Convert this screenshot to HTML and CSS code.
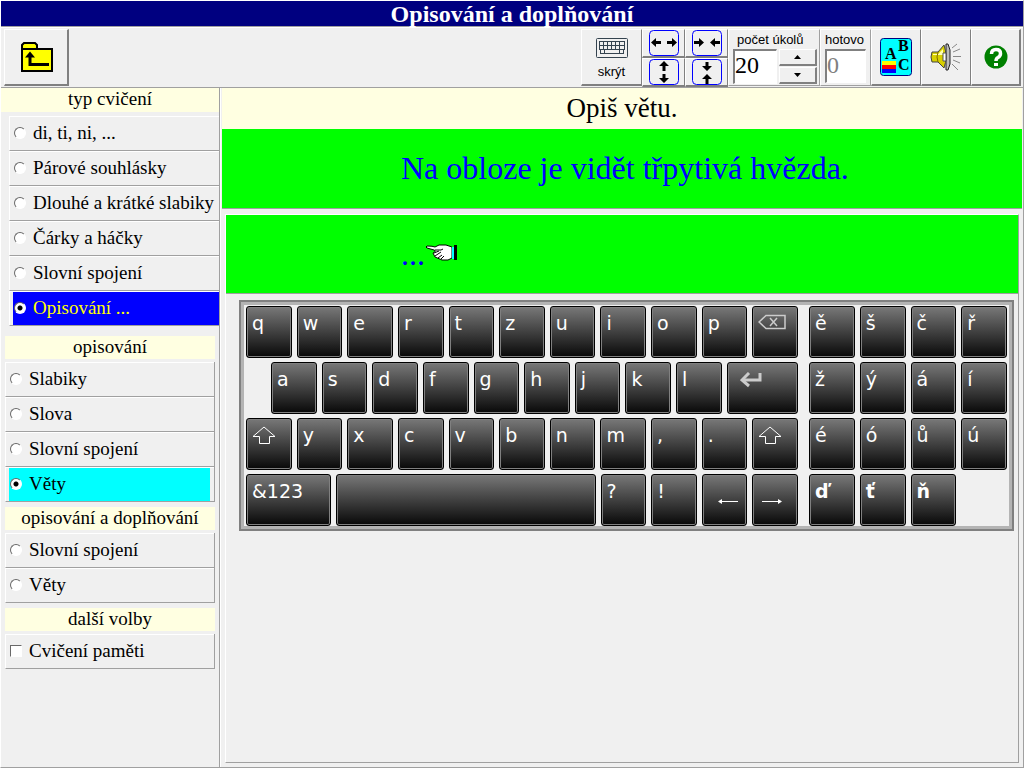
FILE: index.html
```html
<!DOCTYPE html>
<html lang="cs">
<head>
<meta charset="utf-8">
<title>Opisování a doplňování</title>
<link rel="stylesheet" href="styles.css">
</head>
<body>
<div class="app">
  <h1 class="title">Opisování a doplňování</h1>
  <header class="toolbar">
    <button class="back" aria-label="Zpět">
      <svg width="32" height="30" viewBox="0 0 32 30"><path d="M1 7V3L3 1H14L16 3V7H31V29H1Z" fill="#ff0" stroke="#000" stroke-width="2"/><path d="M2 7H16" stroke="#000" stroke-width="2"/><path d="M9 13V22.500H28" fill="none" stroke="#000" stroke-width="3"/><path d="M4 15.500L9 9.500L14 15.500Z"/></svg>
    </button>
    <div class="tools">
      <button class="tool hide"><svg width="32" height="20" viewBox="0 0 32 20"><g fill="none" stroke="#34434f"><rect x=".5" y=".5" width="31" height="19" rx="1"/><path d="M3 3.500H29M3 7.500H29M3 11.500H29M4 15.500H28M3.500 3V12M7.500 3V12M11.500 3V12M15.500 3V12M19.500 3V12M23.500 3V12M28.500 3V12M4.500 12V16M8.500 12V16M23.500 12V16M27.500 12V16"/></g></svg>skrýt</button>
      <div class="sizes">
        <button class="size" aria-label="Rozšířit"><svg width="30" height="26" viewBox="0 0 30 26"><rect class="frame" x=".5" y=".5" width="29" height="25" rx="4"/><path class="ink" d="M4 12.500H12M18 12.500H26"/><path d="M2 12.500L7 8V17ZM28 12.500L23 8V17Z"/></svg></button>
        <button class="size" aria-label="Zúžit"><svg width="30" height="26" viewBox="0 0 30 26"><rect class="frame" x=".5" y=".5" width="29" height="25" rx="4"/><path class="ink" d="M2 12.500H10M20 12.500H28"/><path d="M12 12.500L7 8V17ZM18 12.500L23 8V17Z"/></svg></button>
        <button class="size" aria-label="Zvýšit"><svg width="30" height="26" viewBox="0 0 30 26"><rect class="frame" x=".5" y=".5" width="29" height="25" rx="4"/><path class="ink" d="M15 4V12M15 15V22"/><path d="M15 2L20 7H10ZM15 24L20 19H10Z"/></svg></button>
        <button class="size" aria-label="Snížit"><svg width="30" height="26" viewBox="0 0 30 26"><rect class="frame" x=".5" y=".5" width="29" height="25" rx="4"/><path class="ink" d="M15 3V10M15 17V25"/><path d="M15 12L20 7H10ZM15 15L20 20H10Z"/></svg></button>
      </div>
      <div class="count tasks">
        <label for="tasks">počet úkolů</label>
        <div class="spin">
          <input id="tasks" type="text" value="20">
          <div class="steps"><button aria-label="Více"><svg width="7" height="4"><path d="M0 4L3.500 0L7 4Z"/></svg></button><button aria-label="Méně"><svg width="7" height="4"><path d="M0 0H7L3.500 4Z"/></svg></button></div>
        </div>
      </div>
      <div class="count done">
        <label for="done">hotovo</label>
        <input id="done" type="text" value="0" readonly>
      </div>
      <button class="tool" aria-label="Písmo"><svg width="32" height="38" viewBox="0 0 32 38"><rect x=".5" y=".5" width="31" height="37" rx="3" fill="#0ff" stroke="#000080"/><path d="M2 23H16V27H2Z" fill="#ff0"/><path d="M2 27H16V31H2Z" fill="#f00"/><path d="M2 31H16V35H2Z" fill="#00f"/><g class="letters"><text x="5" y="21">A</text><text x="18" y="13">B</text><text x="18" y="32">C</text></g></svg></button>
      <button class="tool" aria-label="Zvuk"><svg width="32" height="30" viewBox="0 0 32 30"><path d="M16 2H18L20 8V22L18 28H16Z" fill="#bbb" stroke="#222"/><path d="M2 10H8L14 3Q18 15 14 26L8 20H2Q0 15 2 10Z" fill="#d8d000" stroke="#444"/><path d="M3 12H8L13 7V13H3Z" fill="#ffffb0"/><path d="M8 10Q6 15 8 20" fill="none" stroke="#806c00"/><path d="M13 11H16V19H13Z" fill="#fff" stroke="#555"/><path d="M22 6L27 2M23 10L30 7M23 14.500H31M23 18L30 21M22 22L28 28" stroke="#888"/></svg></button>
      <button class="tool" aria-label="Nápověda"><svg width="24" height="24" viewBox="0 0 24 24"><circle cx="12" cy="12" r="11.500" fill="#008000"/><path d="M7.500 9Q7.500 4.500 12 4.500T16.500 8.500Q16.500 11 14 12.500Q12 13.500 12 16" fill="none" stroke="#fff" stroke-width="3.500"/><path d="M10 18H14V21H10Z" fill="#fff"/></svg></button>
    </div>
  </header>
  <div class="body">
    <aside class="side">
      <h2 class="group wide">typ cvičení</h2>
      <div class="list types">
        <label class="opt"><input type="radio" name="type">di, ti, ni, ...</label>
        <label class="opt"><input type="radio" name="type">Párové souhlásky</label>
        <label class="opt"><input type="radio" name="type">Dlouhé a krátké slabiky</label>
        <label class="opt"><input type="radio" name="type">Čárky a háčky</label>
        <label class="opt"><input type="radio" name="type">Slovní spojení</label>
        <label class="opt blue"><input type="radio" name="type" checked>Opisování ...</label>
      </div>
      <h2 class="group">opisování</h2>
      <div class="list">
        <label class="opt"><input type="radio" name="mode">Slabiky</label>
        <label class="opt"><input type="radio" name="mode">Slova</label>
        <label class="opt"><input type="radio" name="mode">Slovní spojení</label>
        <label class="opt cyan"><input type="radio" name="mode" checked>Věty</label>
      </div>
      <h2 class="group">opisování a doplňování</h2>
      <div class="list">
        <label class="opt"><input type="radio" name="mode">Slovní spojení</label>
        <label class="opt"><input type="radio" name="mode">Věty</label>
      </div>
      <h2 class="group">další volby</h2>
      <div class="list">
        <label class="opt"><input type="checkbox">Cvičení paměti</label>
      </div>
    </aside>
    <main class="main">
      <p class="prompt">Opiš větu.</p>
      <p class="sentence">Na obloze je vidět třpytivá hvězda.</p>
      <section class="work">
        <p class="answer">...<svg width="33" height="17" viewBox="0 0 33 17"><path d="M2 2Q8 2 10 3L14 1H21L27 3V14L23 16H17L10 13L8 9Q12 7 9 6L2 4Q0 3 2 2Z" fill="#fff" stroke="#000"/><path d="M10 6H16L18 5M9 9L14 7M10 12L16 8M13 14L17 11M16 15L19 12" fill="none" stroke="#000"/><path d="M27 3H29V15H27Z" fill="#0ff"/><path d="M29 1H32V16H29Z"/></svg></p>
        <div class="board">
          <div class="keys letters-pad">
            <div class="row"><button class="key">q</button><button class="key">w</button><button class="key">e</button><button class="key">r</button><button class="key">t</button><button class="key">z</button><button class="key">u</button><button class="key">i</button><button class="key">o</button><button class="key">p</button><button class="key" aria-label="Smazat"><svg width="28" height="16" viewBox="0 0 28 16"><path d="M8 1.500H27V14.500H8L1 8Z" fill="none" stroke="#ccc" stroke-width="1.500"/><path d="M12 4L19 12M19 4L12 12" stroke="#ccc" stroke-width="1.500"/></svg></button></div>
            <div class="row"><button class="key shifted">a</button><button class="key">s</button><button class="key">d</button><button class="key">f</button><button class="key">g</button><button class="key">h</button><button class="key">j</button><button class="key">k</button><button class="key">l</button><button class="key stretch enter" aria-label="Enter"><svg width="22" height="16" viewBox="0 0 22 16"><path d="M20 1V8H3" fill="none" stroke="#ccc" stroke-width="3"/><path d="M9 1L2 8L9 14" fill="none" stroke="#ccc" stroke-width="3"/></svg></button></div>
            <div class="row"><button class="key" aria-label="Shift"><svg width="24" height="18" viewBox="0 0 24 18"><path d="M12 1L23 10.500H17.500V17.500H7.500V10.500H1Z" fill="none" stroke="#fff"/></svg></button><button class="key">y</button><button class="key">x</button><button class="key">c</button><button class="key">v</button><button class="key">b</button><button class="key">n</button><button class="key">m</button><button class="key">,</button><button class="key">.</button><button class="key" aria-label="Shift"><svg width="24" height="18" viewBox="0 0 24 18"><path d="M12 1L23 10.500H17.500V17.500H7.500V10.500H1Z" fill="none" stroke="#fff"/></svg></button></div>
            <div class="row"><button class="key symbols">&amp;123</button><button class="key stretch" aria-label="Mezerník"></button><button class="key">?</button><button class="key">!</button><button class="key arrow right" aria-label="Vlevo"><svg width="20" height="7" viewBox="0 0 20 7"><path d="M1 3.500H20" stroke="#fff"/><path d="M0 3.500L4 1V6Z" fill="#fff"/></svg></button><button class="key arrow" aria-label="Vpravo"><svg width="20" height="7" viewBox="0 0 20 7"><path d="M0 3.500H19" stroke="#fff"/><path d="M20 3.500L16 1V6Z" fill="#fff"/></svg></button></div>
          </div>
          <div class="keys accents-pad">
            <button class="key">ě</button><button class="key">š</button><button class="key">č</button><button class="key">ř</button>
            <button class="key">ž</button><button class="key">ý</button><button class="key">á</button><button class="key">í</button>
            <button class="key">é</button><button class="key">ó</button><button class="key">ů</button><button class="key">ú</button>
            <button class="key bold">ď</button><button class="key bold">ť</button><button class="key bold">ň</button>
          </div>
        </div>
      </section>
    </main>
  </div>
</div>
</body>
</html>
```
FILE: styles.css
```css
* { box-sizing: border-box; }
body {
  margin: 0;
  background: #f0f0f0;
  color: #000;
  font-family: "Liberation Serif", serif;
}
h1, h2, p { margin: 0; font-weight: normal; }
button { padding: 0; border: 0; background: #f0f0f0; color: #000; font-family: inherit; }
svg { display: block; }
.app {
  display: flex;
  flex-direction: column;
  min-height: 100vh;
  border: 1px solid #fff;
  border-right-color: #a0a0a0;
  border-bottom-color: #a0a0a0;
}

.title {
  height: 26px;
  border-bottom: 1px solid #a0a0a0;
  background: #000080;
  color: #fff;
  font-size: 24px;
  font-weight: bold;
  line-height: 26px;
  text-align: center;
}

.toolbar {
  display: flex;
  justify-content: space-between;
  height: 61px;
  padding: 1px 2px 1px 3px;
  border-top: 1px solid #fff;
  border-bottom: 1px solid #a0a0a0;
}
.back, .tool, .size, .steps button {
  border: 1px solid #fff;
  border-right: 2px solid #808080;
  border-bottom: 2px solid #808080;
}
.back { width: 65px; padding-left: 16px; }
.tools { display: flex; }
.tool {
  display: flex;
  flex-direction: column;
  align-items: center;
  justify-content: center;
  width: 50px;
  border-right-width: 1px;
}
.tool:last-child { border-right-width: 2px; }
.hide {
  gap: 6px;
  width: 61px;
  padding-top: 2px;
  font-family: "Liberation Sans", sans-serif;
  font-size: 13px;
}
.sizes { display: grid; grid-template-columns: 43px 43px; grid-template-rows: 1fr 1fr; }
.size { display: grid; place-items: center; border-right-width: 1px; }
.frame { fill: none; stroke: #00f; }
.ink { stroke: #000; stroke-width: 3; }
.count {
  display: flex;
  flex-direction: column;
  gap: 2px;
  padding: 2px 2px 2px 4px;
  border: 1px solid #fff;
  border-right-color: #a0a0a0;
  border-bottom-color: #a0a0a0;
  font-family: "Liberation Sans", sans-serif;
  font-size: 13px;
  line-height: 15px;
}
.count label { padding-left: 4px; white-space: nowrap; }
.tasks { width: 92px; }
.done { width: 51px; }
.done label { padding-left: 0; }
.count input {
  width: 44px;
  height: 35px;
  padding: 0 0 3px;
  border: 1px solid #fff;
  border-top: 2px solid #808080;
  border-left: 2px solid #808080;
  background: #fff;
  font-family: "Liberation Serif", serif;
  font-size: 24px;
}
.count input[readonly] { width: 41px; color: #808080; }
.spin { display: flex; gap: 2px; }
.steps { display: flex; flex: 1; flex-direction: column; gap: 1px; }
.steps button { display: grid; flex: 1; place-items: center; }
.letters { font: bold 16px "Liberation Serif", serif; }

.body { display: flex; flex: 1; }
.side { width: 219px; border-right: 1px solid #a0a0a0; }
.group {
  height: 23px;
  margin: 0 4px 3px;
  background: #ffffe1;
  font-size: 19px;
  line-height: 22px;
  text-align: center;
}
.wide { height: 24px; margin: 0 0 4px; }
.list { margin: 0 4px 5px; border-right: 1px solid #a0a0a0; }
.types { margin: 0 0 10px 8px; border-right: 0; }
.opt {
  display: flex;
  align-items: center;
  gap: 7px;
  height: 35px;
  padding: 0 4px 2px;
  border-top: 1px solid #fff;
  border-left: 1px solid #fff;
  border-bottom: 1px solid #a0a0a0;
  font-size: 19px;
  white-space: nowrap;
}
.opt input {
  appearance: none;
  flex: none;
  width: 12px;
  height: 12px;
  margin: 0;
  border: 1px solid #fff;
  border-top-color: #696969;
  border-left-color: #696969;
  background: #fff;
}
.opt input[type="radio"] { border-radius: 50%; }
.opt input[type="radio"]:checked { background: radial-gradient(circle, #000 2px, #fff 3px); }
.blue { background: linear-gradient(90deg, #f0f0f0 3px, #00f 3px); color: #ff0; }
.cyan { background: linear-gradient(#0ff, #0ff) 3px 0 / calc(100% - 7px) 100% no-repeat; }

.main { display: flex; flex: 1; flex-direction: column; min-width: 0; padding: 0 1px 4px; border-left: 1px solid #fff; }
.prompt {
  background: #ffffe1;
  font-size: 27px;
  line-height: 41px;
  text-align: center;
}
.sentence {
  height: 80px;
  padding-left: 179px;
  border-bottom: 1px solid #a0a0a0;
  background: #0f0;
  color: #00f;
  font-size: 32px;
  line-height: 78px;
}
.work {
  flex: 1;
  margin: 5px 3px 0;
  border: 1px solid #fff;
  border-right-color: #a0a0a0;
  border-bottom-color: #a0a0a0;
}
.answer {
  display: flex;
  height: 79px;
  padding-left: 175px;
  border-bottom: 1px solid #a0a0a0;
  background: #0f0;
  color: #00f;
  font-size: 32px;
  line-height: 78px;
}
.answer svg { margin-top: 29px; }
.board {
  display: flex;
  gap: 11px;
  margin: 6px 4px 0 13px;
  padding: 4px 5px 3px;
  border: 2px solid #808080;
  box-shadow: inset 0 0 0 3px #b4b4b4;
}
.keys { gap: 4px; }
.letters-pad { display: flex; flex: 552; flex-direction: column; }
.accents-pad { display: grid; flex: 198; grid-template-columns: repeat(4, 1fr); column-gap: 5px; align-content: start; }
.row { display: flex; gap: 5px; }
.key {
  display: flex;
  height: 52px;
  padding: 3px 5px;
  border: 1px solid #000;
  border-radius: 3px;
  background: linear-gradient(#787878, #080808);
  box-shadow: inset 0 0 0 1px #808080;
  color: #fff;
  font-family: "DejaVu Sans", sans-serif;
  font-size: 19px;
  line-height: 27px;
}
.row .key { width: calc((100% - 50px) / 11); }
.row .shifted { margin-left: 25px; }
.row .symbols { width: 85px; }
.row .stretch { flex: 1; }
.key svg { margin-top: 4px; }
.row .enter { padding-left: 12px; }
.enter svg { margin-top: 6px; }
.row .arrow { padding-left: 9px; }
.row .right { padding-left: 15px; }
.arrow svg { margin-top: 20px; }
.bold { font-weight: bold; }
```
